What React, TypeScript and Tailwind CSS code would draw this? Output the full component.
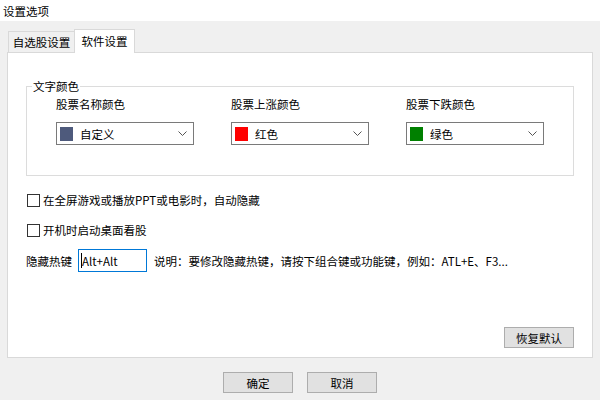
import React from "react";

interface ColorOption {
  label: string;
  name: string;
  swatch: string;
}

const colorOptions: ColorOption[] = [
  { label: "股票名称颜色", name: "自定义", swatch: "bg-[#4e5a7c]" },
  { label: "股票上涨颜色", name: "红色", swatch: "bg-[#ff0000]" },
  { label: "股票下跌颜色", name: "绿色", swatch: "bg-[#008000]" },
];

const Chevron = () => (
  <svg width="9" height="5" viewBox="0 0 9 5" className="text-[#555]">
    <polyline points="0.5,0.5 4.5,4.5 8.5,0.5" fill="none" stroke="currentColor" strokeWidth="1" />
  </svg>
);

const ColorSelect: React.FC<{ option: ColorOption }> = ({ option }) => (
  <div className="flex w-[138px] flex-col">
    <div className="h-[16px] leading-[16px]">{option.label}</div>
    <div className="mt-[10px] flex h-[23px] items-center border border-[#7a7a7a] bg-white pl-[3px] pr-[6px]">
      <span className={`h-[14px] w-[13px] ${option.swatch}`} />
      <span className="ml-[7px] flex-1 leading-[16px]">{option.name}</span>
      <Chevron />
    </div>
  </div>
);

const CheckRow: React.FC<{ text: string; className?: string }> = ({ text, className }) => (
  <label className={`flex h-[16px] items-center ${className ?? ""}`}>
    <span className="ml-[1px] h-[13px] w-[13px] border border-[#333] bg-white" />
    <span className="ml-[3px] leading-[16px]">{text}</span>
  </label>
);

const WinButton: React.FC<{ children: React.ReactNode }> = ({ children }) => (
  <button
    type="button"
    className="flex h-[21px] w-[70px] items-center justify-center border border-[#adadad] bg-[#e1e1e1] leading-[16px] text-black"
  >
    {children}
  </button>
);

export default function App() {
  return (
    <div
      className="flex h-[400px] w-[600px] flex-col bg-[#f0f0f0] text-[11.5px] text-black"
      style={{ fontFamily: '"Noto Sans CJK SC", "Liberation Sans", sans-serif' }}
    >
      {/* title bar */}
      <div className="flex h-[21px] items-center bg-white pl-[3px] leading-[16px]">设置选项</div>

      {/* tabs */}
      <div className="px-[7px] pt-[8px]">
        <div className="flex h-[23px] items-end">
          <div className="ml-[1px] flex h-[21px] w-[67px] items-center justify-center border border-b-0 border-[#d9d9d9] bg-[#f0f0f0] leading-[16px]">
            自选股设置
          </div>
          <div className="relative z-10 -mb-px -ml-px flex h-[24px] w-[61px] items-center justify-center border border-b-0 border-[#d9d9d9] bg-white pb-[2px] leading-[16px]">
            软件设置
          </div>
        </div>

        {/* panel */}
        <div className="flex h-[306px] flex-col border border-[#d9d9d9] bg-white px-[18px] pb-[9px]">
          <div className="relative mt-[33px] h-[90px] border border-[#dcdcdc]">
            <span className="absolute -top-[9px] left-[5px] bg-white px-px leading-[16px]">文字颜色</span>
            <div className="mt-[9px] flex gap-[37px] pl-[29px]">
              {colorOptions.map((o) => (
                <ColorSelect key={o.label} option={o} />
              ))}
            </div>
          </div>

          <CheckRow className="mt-[16px]" text="在全屏游戏或播放PPT或电影时，自动隐藏" />
          <CheckRow className="mt-[14px]" text="开机时启动桌面看股" />

          <div className="mt-[11px] flex h-[23px] items-center">
            <span className="leading-[16px]">隐藏热键</span>
            <div className="ml-[6px] flex h-[23px] w-[69px] items-center border border-[#0078d7] bg-white pl-[2px]">
              <span className="h-[15px] w-px bg-black" />
              <span className="leading-[16px]">Alt+Alt</span>
            </div>
            <span className="ml-[7px] leading-[16px]">说明：要修改隐藏热键，请按下组合键或功能键，例如：ATL+E、F3...</span>
          </div>

          <div className="mt-auto flex justify-end">
            <WinButton>恢复默认</WinButton>
          </div>
        </div>
      </div>

      {/* footer */}
      <div className="mt-[14px] flex justify-center gap-[14px]">
        <WinButton>确定</WinButton>
        <WinButton>取消</WinButton>
      </div>
    </div>
  );
}
